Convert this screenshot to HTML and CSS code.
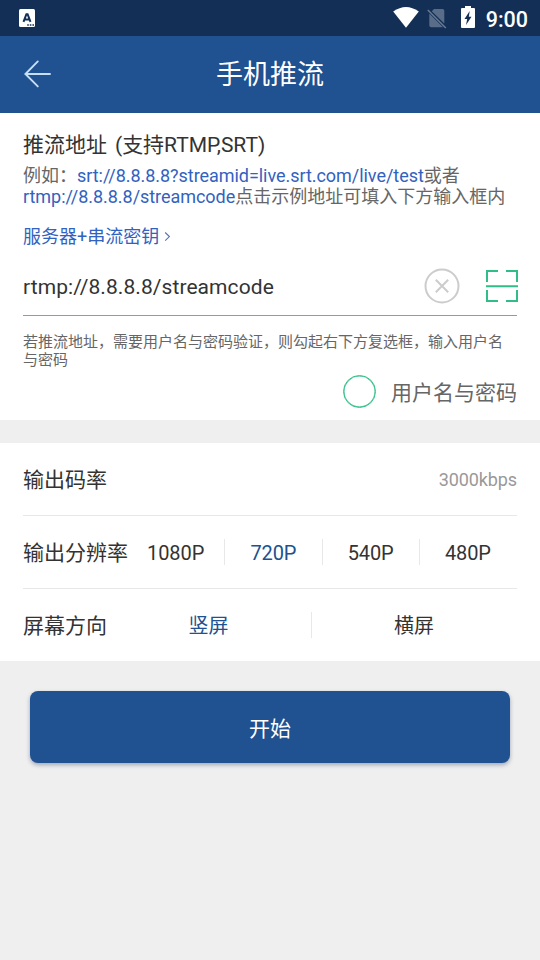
FILE: index.html
```html
<!DOCTYPE html>
<html lang="zh-CN">
<head>
<meta charset="utf-8">
<title>手机推流</title>
<link rel="stylesheet" href="styles.css">
</head>
<body>
<div class="status">
  <svg class="app-icon" width="16" height="18" viewBox="0 0 16 18"><rect width="16" height="18" rx="1.5" fill="#fff"/><path d="M4.5 12.8 7.4 5.2H8.6L11.5 12.8M5.7 10.4H10.3" fill="none" stroke="#132f56" stroke-width="2"/><path d="M8.2 16H15" stroke="#132f56" stroke-width="1.4" stroke-dasharray="1.6 1"/></svg>
  <svg class="wifi" width="26" height="21" viewBox="0 0 26 21"><path d="M.2 4.6Q13-4.6 25.8 4.6L13 20.8Z" fill="#fff"/></svg>
  <svg class="sim" width="20" height="21" viewBox="0 0 20 21"><path d="M7 1H15.5Q17.3 1 17.3 2.8V15.5L4.8 3.2ZM2.3 5.5 16 19.2H4.2Q2.3 19.2 2.3 17.4Z" fill="#596d89"/><path d="M.8 2 18.8 20" stroke="#687a94" stroke-width="1.5"/></svg>
  <svg class="battery" width="14" height="22" viewBox="0 0 14 22"><path d="M4 0H10V2H13Q14 2 14 3V21Q14 22 13 22H1Q0 22 0 21V3Q0 2 1 2H4Z" fill="#fff"/><path d="M8.7 5 3.5 13H6.2L5 19 10.5 10.7H7.8Z" fill="#132f56"/></svg>
  <span class="clock">9:00</span>
</div>
<header class="bar">
  <svg class="back" width="28" height="28" viewBox="0 0 28 28"><path d="M14.8 1.4 2.4 14 14.8 26.4M2.4 14H27" fill="none" stroke="#c8def5" stroke-width="1.9" stroke-linecap="round"/></svg>
  <h1>手机推流</h1>
</header>
<section class="address">
  <h2>推流地址 (支持RTMP,SRT)</h2>
  <p class="example">例如：<a>srt://8.8.8.8?streamid=live.srt.com/live/test</a>或者<br><a>rtmp://8.8.8.8/streamcode</a>点击示例地址可填入下方输入框内</p>
  <a class="server">服务器+串流密钥<svg width="7" height="12" viewBox="0 0 7 12"><path d="M1.2 1.5 5.4 5.6 1.2 9.7" fill="none" stroke="#5272b4" stroke-width="1.1"/></svg></a>
  <div class="field">
    <span class="value">rtmp://8.8.8.8/streamcode</span>
    <svg class="clear" width="36" height="36" viewBox="0 0 36 36" fill="none" stroke="#ccc" stroke-width="2"><circle cx="18" cy="18" r="16.5"/><path d="M11.8 11.8 24.2 24.2M24.2 11.8 11.8 24.2"/></svg>
    <svg class="scan" width="32" height="32" viewBox="0 0 32 32" fill="none" stroke="#31bd87" stroke-width="2"><path d="M1 12V1H12M20 1H31V12M1 20V31H12M20 31H31V20M0 16.3H32"/></svg>
  </div>
  <p class="note">若推流地址，需要用户名与密码验证，则勾起右下方复选框，输入用户名<br>与密码</p>
  <div class="check"><span class="circle"></span><span class="check-label">用户名与密码</span></div>
</section>
<section class="settings">
  <div class="row"><span class="label">输出码率</span><span class="rate">3000kbps</span></div>
  <div class="row"><span class="label">输出分辨率</span>
    <div class="options"><span>1080P</span><span class="on">720P</span><span>540P</span><span>480P</span></div>
  </div>
  <div class="row"><span class="label">屏幕方向</span>
    <div class="options wide"><span class="on">竖屏</span><span>横屏</span></div>
  </div>
</section>
<button class="start">开始</button>
</body>
</html>
```
FILE: styles.css
```css
* { box-sizing: border-box; }
body {
  margin: 0;
  min-height: 960px;
  background: #efefef;
  color: #333;
  font-family: Roboto, "Noto Sans CJK SC", sans-serif;
  font-size: 21px;
}
h1, h2, p { margin: 0; font-weight: 400; }
svg { display: block; flex: none; }
.status {
  display: flex;
  align-items: center;
  height: 36px;
  padding: 0 12px 0 19px;
  background: #132f56;
}
.wifi { margin-left: auto; margin-top: -2px; }
.sim { margin-left: 8px; }
.battery { margin: -2px 11px 0 14px; }
.clock { color: #fff; font-size: 21.5px; font-weight: 500; line-height: 36px; padding-top: 3px; }
.bar {
  display: grid;
  grid-template-columns: 28px 1fr 28px;
  align-items: center;
  height: 77px;
  padding: 0 23px 2px;
  background: #205191;
}
.bar h1 { padding-top: 2px; color: #fff; font-size: 27px; line-height: 40px; text-align: center; }
.address {
  height: 307px;
  padding: 16px 23px 0;
  background: #fff;
}
.address h2 { font-size: 21px; line-height: 32px; word-spacing: 3px; letter-spacing: -.04px; }
.example { margin-top: 4px; color: #666; font-size: 18px; line-height: 21px; white-space: nowrap; }
.example a, .server { color: #3262c0; }
.example a { letter-spacing: -.045px; }
.server { display: flex; align-items: center; gap: 5px; margin-top: 17px; font-size: 18px; line-height: 26px; }
.field {
  display: flex;
  align-items: center;
  height: 66px;
  padding-top: 7px;
  border-bottom: 1px solid #999;
}
.value { flex: 1; padding-top: 2px; letter-spacing: .08px; }
.clear { margin-right: 26px; }
.scan { margin-right: -1px; }
.note { margin-top: 17px; color: #666; font-size: 15px; line-height: 18px; white-space: nowrap; }
.check { display: flex; align-items: center; justify-content: flex-end; gap: 15px; margin-top: 6px; height: 33px; color: #666; }
.check-label { margin-top: -1px; }
.circle { width: 33px; height: 33px; border: 1px solid #31bd87; box-shadow: inset 0 0 0 .5px #31bd87; border-radius: 50%; }
.settings { margin-top: 23px; padding: 0 23px; background: #fff; }
.row { display: flex; align-items: center; justify-content: space-between; height: 73px; border-bottom: 1px solid #e8e8e8; }
.row:last-child { height: 72px; border-bottom: 0; }
.label { margin-top: -2px; }
.rate { color: #999; font-size: 18px; letter-spacing: -.12px; }
.options {
  flex: 1;
  display: grid;
  grid-template-columns: repeat(4, 1fr);
  margin: 0 1px 0 -1px;
  font-size: 20px;
  letter-spacing: -.1px;
  text-align: center;
}
.options.wide { grid-template-columns: repeat(2, 1fr); letter-spacing: 0; }
.options span { height: 26px; padding-top: 1px; line-height: 26px; border-left: 1px solid #e8e8e8; }
.options span:first-child { border-left: 0; }
.options .on { color: #205191; }
.start {
  display: block;
  width: 480px;
  height: 72px;
  margin: 30px auto 0;
  border: 0;
  border-radius: 8px;
  background: #205191;
  box-shadow: 0 2px 4px rgba(40, 60, 100, .4);
  color: #fff;
  font: inherit;
}
```
